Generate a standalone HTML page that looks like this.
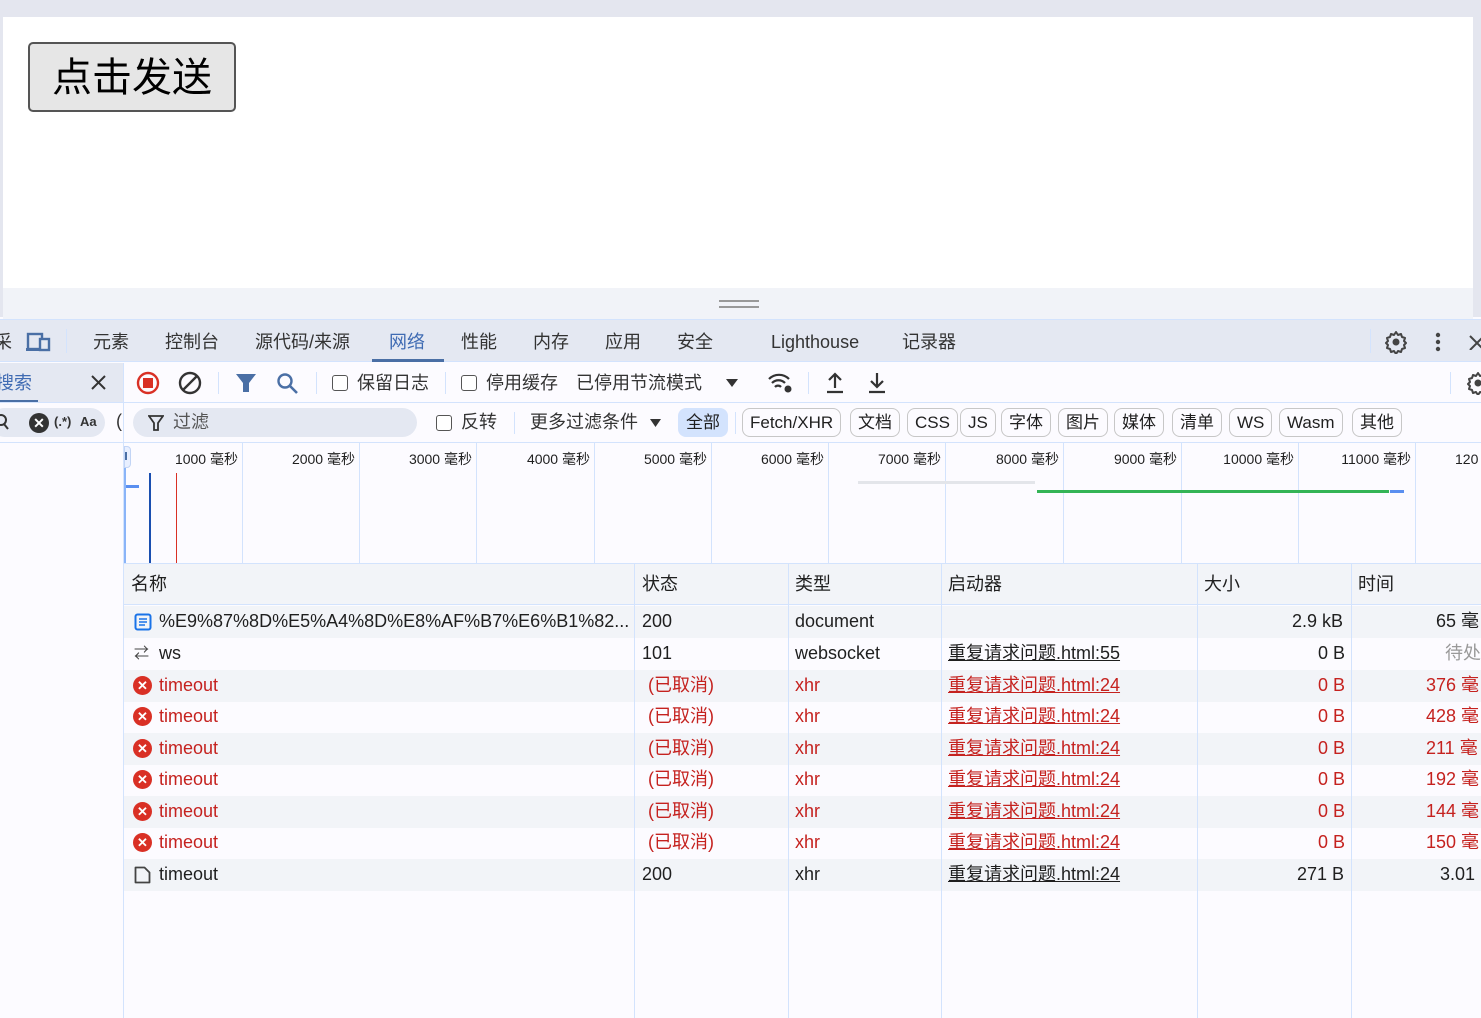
<!DOCTYPE html>
<html><head><meta charset="utf-8">
<style>
*{box-sizing:border-box;margin:0;padding:0}
body{width:1481px;height:1018px;overflow:hidden;position:relative;background:#fcfbff;font-family:"Liberation Sans","Noto Sans CJK SC",sans-serif;color:#1f1f1f}
.a{position:absolute;white-space:nowrap}
.vl{position:absolute;width:1px;background:#d3e3fd}
.hl{position:absolute;height:1px;background:#d3e3fd}
.tab{position:absolute;top:330px;font-size:18px;line-height:24px;color:#333}
.chip{position:absolute;top:408px;height:29px;border:1px solid #c7c7c7;border-radius:8px;font-size:17px;line-height:27px;padding:0 7px;color:#1f1f1f;background:#fcfbff}
.tl{position:absolute;top:450px;font-size:14px;line-height:18px;color:#1f1f1f;text-align:right;width:110px}
.row{position:absolute;left:124px;width:1357px;height:32px;font-size:18px}
.row .a{top:0;line-height:31px}
.g{background:#f2f4f8}
.red{color:#c5221f}
.u{text-decoration:underline}
.cb{position:absolute;width:16px;height:16px;border:1.5px solid #555;border-radius:3px;background:#fff}
.hd{position:absolute;top:564px;font-size:18px;line-height:40px}
</style></head><body>
<div class="a" style="left:0;top:0;width:1481px;height:17px;background:#e4e6ef"></div>
<div class="a" style="left:0;top:17px;width:3px;height:300px;background:#e4e6ef"></div>
<div class="a" style="left:1473px;top:17px;width:8px;height:300px;background:#e4e6ef"></div>
<div class="a" style="left:3px;top:17px;width:1470px;height:271px;background:#fff"></div>
<div class="a" style="left:28px;top:42px;width:208px;height:70px;border:2px solid #555;border-radius:5px;background:#e6e6e6;font-size:40px;line-height:68px;text-align:center;color:#000">点击发送</div>
<div class="a" style="left:3px;top:288px;width:1470px;height:31px;background:#f1f3f8"></div>
<div class="a" style="left:719px;top:300px;width:40px;height:2px;background:#999"></div>
<div class="a" style="left:719px;top:306px;width:40px;height:2px;background:#999"></div>

<div class="a" style="left:0;top:319px;width:1481px;height:43px;background:#e4e8f2;border-top:1px solid #d3e3fd;border-bottom:1px solid #d3e3fd"></div>
<div class="tab" style="left:-6px">采</div>
<svg class="a" style="left:26px;top:331px" width="26" height="22" viewBox="0 0 26 22"><rect x="2" y="3" width="14" height="15" fill="none" stroke="#4a6fa5" stroke-width="2.4"/><rect x="14" y="8" width="9" height="11" fill="#e4e8f2" stroke="#4a6fa5" stroke-width="2.4"/><rect x="0" y="17" width="14" height="3" fill="#4a6fa5"/></svg>
<div class="vl" style="left:66px;top:329px;height:24px"></div>
<div class="tab" style="left:93px">元素</div>
<div class="tab" style="left:165px">控制台</div>
<div class="tab" style="left:255px">源代码/来源</div>
<div class="tab" style="left:389px;color:#3f6bb3">网络</div>
<div class="a" style="left:372px;top:359px;width:72px;height:3px;background:#4a6fa5"></div>
<div class="tab" style="left:461px">性能</div>
<div class="tab" style="left:533px">内存</div>
<div class="tab" style="left:605px">应用</div>
<div class="tab" style="left:677px">安全</div>
<div class="tab" style="left:771px">Lighthouse</div>
<div class="tab" style="left:902px">记录器</div>
<div class="vl" style="left:1370px;top:329px;height:24px"></div>
<svg class="a" style="left:1384px;top:330px" width="24" height="24" viewBox="0 0 24 24"><path d="M12 2l2 3 3-1 1 3 3 1-1 3 2 2-2 2 1 3-3 1-1 3-3-1-2 3-2-3-3 1-1-3-3-1 1-3-2-2 2-2-1-3 3-1 1-3 3 1z" fill="none" stroke="#444" stroke-width="2" stroke-linejoin="round"/><circle cx="12" cy="12" r="3.5" fill="#444"/></svg>
<svg class="a" style="left:1434px;top:332px" width="8" height="22"><circle cx="4" cy="3" r="2.2" fill="#444"/><circle cx="4" cy="10" r="2.2" fill="#444"/><circle cx="4" cy="17" r="2.2" fill="#444"/></svg>
<svg class="a" style="left:1468px;top:334px" width="16" height="16"><path d="M2 2l14 14M16 2L2 16" stroke="#444" stroke-width="2"/></svg>

<div class="a" style="left:0;top:363px;width:123px;height:40px;background:#e4e8f2"></div>
<div class="a" style="left:-4px;top:371px;font-size:18px;line-height:24px;color:#3f6bb3">搜索</div>
<div class="a" style="left:0;top:400px;width:38px;height:3px;background:#4a6fa5"></div>
<svg class="a" style="left:91px;top:375px" width="15" height="15"><path d="M1 1l13 13M14 1L1 14" stroke="#333" stroke-width="2"/></svg>
<div class="vl" style="left:123px;top:363px;height:655px"></div>
<div class="hl" style="left:0;top:402px;width:1481px"></div>
<svg class="a" style="left:136px;top:371px" width="24" height="24"><circle cx="12" cy="12" r="10" fill="none" stroke="#d93025" stroke-width="2.4"/><rect x="7" y="7" width="10" height="10" fill="#d93025"/></svg>
<svg class="a" style="left:178px;top:371px" width="24" height="24"><circle cx="12" cy="12" r="10" fill="none" stroke="#333" stroke-width="2.4"/><path d="M5 19L19 5" stroke="#333" stroke-width="2.4"/></svg>
<div class="vl" style="left:218px;top:372px;height:22px"></div>
<svg class="a" style="left:235px;top:373px" width="22" height="20"><path d="M1 1h20l-7 9v9h-6v-9z" fill="#4a6fa5"/></svg>
<svg class="a" style="left:276px;top:372px" width="24" height="24"><circle cx="9" cy="9" r="6.5" fill="none" stroke="#4a6fa5" stroke-width="2.4"/><path d="M14 14l7 7" stroke="#4a6fa5" stroke-width="2.6"/></svg>
<div class="vl" style="left:316px;top:372px;height:22px"></div>
<div class="cb" style="left:332px;top:375px"></div>
<div class="a" style="left:357px;top:371px;font-size:18px;line-height:24px;color:#333">保留日志</div>
<div class="vl" style="left:445px;top:372px;height:22px"></div>
<div class="cb" style="left:461px;top:375px"></div>
<div class="a" style="left:486px;top:371px;font-size:18px;line-height:24px;color:#333">停用缓存</div>
<div class="a" style="left:576px;top:371px;font-size:18px;line-height:24px;color:#333">已停用节流模式</div>
<svg class="a" style="left:725px;top:378px" width="14" height="10"><path d="M1 1h12L7 9z" fill="#333"/></svg>
<svg class="a" style="left:767px;top:371px" width="28" height="24"><path d="M2 8a14 14 0 0 1 20 0M5 12a9 9 0 0 1 13 0M8 16a4 4 0 0 1 6 0" fill="none" stroke="#333" stroke-width="2.2"/><circle cx="21" cy="18" r="3.5" fill="#333"/></svg>
<div class="vl" style="left:808px;top:372px;height:22px"></div>
<svg class="a" style="left:825px;top:371px" width="20" height="24"><path d="M10 17V3M4 9l6-6 6 6M2 21h16" fill="none" stroke="#333" stroke-width="2.2"/></svg>
<svg class="a" style="left:867px;top:371px" width="20" height="24"><path d="M10 2v14M4 10l6 6 6-6M2 21h16" fill="none" stroke="#333" stroke-width="2.2"/></svg>
<div class="vl" style="left:1450px;top:372px;height:22px"></div>
<svg class="a" style="left:1466px;top:371px" width="24" height="24" viewBox="0 0 24 24"><path d="M12 2l2 3 3-1 1 3 3 1-1 3 2 2-2 2 1 3-3 1-1 3-3-1-2 3-2-3-3 1-1-3-3-1 1-3-2-2 2-2-1-3 3-1 1-3 3 1z" fill="none" stroke="#444" stroke-width="2" stroke-linejoin="round"/><circle cx="12" cy="12" r="3.5" fill="#444"/></svg>

<div class="hl" style="left:0;top:442px;width:1481px"></div>
<div class="a" style="left:-10px;top:408px;width:115px;height:29px;border-radius:15px;background:#e4e8f2"></div>
<svg class="a" style="left:-3px;top:414px" width="14" height="16"><circle cx="4" cy="6" r="5" fill="none" stroke="#333" stroke-width="2"/><path d="M7 10l4 5" stroke="#333" stroke-width="2"/></svg>
<div class="a" style="left:29px;top:413px;width:20px;height:20px;border-radius:50%;background:#333;color:#fff;font-size:14px;line-height:20px;text-align:center;font-weight:bold">✕</div>
<div class="a" style="left:54px;top:414px;font-size:13px;font-weight:bold;color:#333">(.*)</div>
<div class="a" style="left:80px;top:414px;font-size:13px;font-weight:bold;color:#333">Aa</div>
<div class="a" style="left:116px;top:411px;font-size:18px;color:#333">(</div>
<div class="a" style="left:133px;top:408px;width:284px;height:29px;border-radius:15px;background:#e4e8f2"></div>
<svg class="a" style="left:148px;top:415px" width="16" height="16"><path d="M1 1h14l-5 7v7h-4V8z" fill="none" stroke="#333" stroke-width="1.8"/></svg>
<div class="a" style="left:173px;top:410px;font-size:18px;line-height:24px;color:#555">过滤</div>
<div class="cb" style="left:436px;top:415px"></div>
<div class="a" style="left:461px;top:410px;font-size:18px;line-height:24px;color:#333">反转</div>
<div class="vl" style="left:514px;top:412px;height:22px"></div>
<div class="a" style="left:530px;top:410px;font-size:18px;line-height:24px;color:#333">更多过滤条件</div>
<svg class="a" style="left:649px;top:418px" width="13" height="10"><path d="M1 1h11L6.5 9z" fill="#333"/></svg>
<div class="a" style="left:678px;top:408px;width:50px;height:29px;border-radius:8px;background:#d3e3fd;font-size:17px;line-height:29px;text-align:center;color:#1f1f1f">全部</div>
<div class="vl" style="left:735px;top:412px;height:22px"></div>
<div class="chip" style="left:742px">Fetch/XHR</div>
<div class="chip" style="left:850px">文档</div>
<div class="chip" style="left:907px">CSS</div>
<div class="chip" style="left:960px">JS</div>
<div class="chip" style="left:1001px">字体</div>
<div class="chip" style="left:1058px">图片</div>
<div class="chip" style="left:1114px">媒体</div>
<div class="chip" style="left:1172px">清单</div>
<div class="chip" style="left:1229px">WS</div>
<div class="chip" style="left:1279px">Wasm</div>
<div class="chip" style="left:1352px">其他</div>

<div class="a" style="left:124px;top:443px;width:1357px;height:120px;background:#fcfbff"></div>
<div class="a" style="left:124px;top:446px;width:7px;height:22px;border:1px solid #c2d4f5;border-radius:0 4px 4px 0;background:#e8efff"></div>
<div class="a" style="left:125px;top:452px;width:2px;height:8px;background:#4a6fa5"></div>
<div class="a" style="left:124px;top:468px;width:2px;height:95px;background:#8ab4f8"></div>
<div class="a" style="left:126px;top:485px;width:13px;height:3px;background:#5a8ff0"></div>
<div class="a" style="left:149px;top:473px;width:2px;height:90px;background:#1a4fb0"></div>
<div class="a" style="left:176px;top:473px;width:1px;height:90px;background:#d93025"></div>
<div class="vl" style="left:242px;top:443px;height:120px"></div>
<div class="vl" style="left:359px;top:443px;height:120px"></div>
<div class="vl" style="left:476px;top:443px;height:120px"></div>
<div class="vl" style="left:594px;top:443px;height:120px"></div>
<div class="vl" style="left:711px;top:443px;height:120px"></div>
<div class="vl" style="left:828px;top:443px;height:120px"></div>
<div class="vl" style="left:945px;top:443px;height:120px"></div>
<div class="vl" style="left:1063px;top:443px;height:120px"></div>
<div class="vl" style="left:1181px;top:443px;height:120px"></div>
<div class="vl" style="left:1298px;top:443px;height:120px"></div>
<div class="vl" style="left:1415px;top:443px;height:120px"></div>
<div class="tl" style="left:128px">1000 毫秒</div>
<div class="tl" style="left:245px">2000 毫秒</div>
<div class="tl" style="left:362px">3000 毫秒</div>
<div class="tl" style="left:480px">4000 毫秒</div>
<div class="tl" style="left:597px">5000 毫秒</div>
<div class="tl" style="left:714px">6000 毫秒</div>
<div class="tl" style="left:831px">7000 毫秒</div>
<div class="tl" style="left:949px">8000 毫秒</div>
<div class="tl" style="left:1067px">9000 毫秒</div>
<div class="tl" style="left:1184px">10000 毫秒</div>
<div class="tl" style="left:1301px">11000 毫秒</div>
<div class="a" style="left:1455px;top:450px;font-size:14px;line-height:18px">120</div>
<div class="a" style="left:858px;top:481px;width:177px;height:3px;background:#e3e5ea"></div>
<div class="a" style="left:1037px;top:490px;width:352px;height:3px;background:#34b456"></div>
<div class="a" style="left:1390px;top:490px;width:14px;height:3px;background:#5a8ff0"></div>

<div class="a" style="left:124px;top:563px;width:1357px;height:42px;background:#f2f4f8;border-top:1px solid #d3e3fd;border-bottom:1px solid #d3e3fd"></div>
<div class="hd" style="left:131px">名称</div>
<div class="hd" style="left:642px">状态</div>
<div class="hd" style="left:795px">类型</div>
<div class="hd" style="left:948px">启动器</div>
<div class="hd" style="left:1204px">大小</div>
<div class="hd" style="left:1358px">时间</div>

<div class="row g" style="top:606px">
<svg class="a" style="left:10px;top:7px" width="18" height="18"><rect x="1.5" y="1.5" width="15" height="15" rx="2" fill="none" stroke="#1a73e8" stroke-width="2"/><path d="M5 6h8M5 9h8M5 12h6" stroke="#1a73e8" stroke-width="1.6"/></svg>
<div class="a" style="left:35px">%E9%87%8D%E5%A4%8D%E8%AF%B7%E6%B1%82...</div>
<div class="a" style="left:518px">200</div><div class="a" style="left:671px">document</div>
<div class="a" style="left:1168px">2.9 kB</div><div class="a" style="left:1312px">65 毫</div></div>
<div class="row" style="top:638px">
<div class="a" style="left:10px;font-size:15px;color:#444">⇄</div>
<div class="a" style="left:35px">ws</div>
<div class="a" style="left:518px">101</div><div class="a" style="left:671px">websocket</div>
<div class="a u" style="left:824px">重复请求问题.html:55</div>
<div class="a" style="left:1194px">0 B</div><div class="a" style="left:1321px;color:#999">待处</div></div>

<div class="row g red" style="top:670px"><div class="a" style="left:9px;top:6px;width:19px;height:19px;border-radius:50%;background:#d93025;color:#fff;font-size:13px;line-height:19px;text-align:center;font-weight:bold">✕</div><div class="a" style="left:35px">timeout</div><div class="a" style="left:524px">(已取消)</div><div class="a" style="left:671px">xhr</div><div class="a u" style="left:824px">重复请求问题.html:24</div><div class="a" style="left:1194px">0 B</div><div class="a" style="left:1302px">376 毫</div></div>
<div class="row red" style="top:701px"><div class="a" style="left:9px;top:6px;width:19px;height:19px;border-radius:50%;background:#d93025;color:#fff;font-size:13px;line-height:19px;text-align:center;font-weight:bold">✕</div><div class="a" style="left:35px">timeout</div><div class="a" style="left:524px">(已取消)</div><div class="a" style="left:671px">xhr</div><div class="a u" style="left:824px">重复请求问题.html:24</div><div class="a" style="left:1194px">0 B</div><div class="a" style="left:1302px">428 毫</div></div>
<div class="row g red" style="top:733px"><div class="a" style="left:9px;top:6px;width:19px;height:19px;border-radius:50%;background:#d93025;color:#fff;font-size:13px;line-height:19px;text-align:center;font-weight:bold">✕</div><div class="a" style="left:35px">timeout</div><div class="a" style="left:524px">(已取消)</div><div class="a" style="left:671px">xhr</div><div class="a u" style="left:824px">重复请求问题.html:24</div><div class="a" style="left:1194px">0 B</div><div class="a" style="left:1302px">211 毫</div></div>
<div class="row red" style="top:764px"><div class="a" style="left:9px;top:6px;width:19px;height:19px;border-radius:50%;background:#d93025;color:#fff;font-size:13px;line-height:19px;text-align:center;font-weight:bold">✕</div><div class="a" style="left:35px">timeout</div><div class="a" style="left:524px">(已取消)</div><div class="a" style="left:671px">xhr</div><div class="a u" style="left:824px">重复请求问题.html:24</div><div class="a" style="left:1194px">0 B</div><div class="a" style="left:1302px">192 毫</div></div>
<div class="row g red" style="top:796px"><div class="a" style="left:9px;top:6px;width:19px;height:19px;border-radius:50%;background:#d93025;color:#fff;font-size:13px;line-height:19px;text-align:center;font-weight:bold">✕</div><div class="a" style="left:35px">timeout</div><div class="a" style="left:524px">(已取消)</div><div class="a" style="left:671px">xhr</div><div class="a u" style="left:824px">重复请求问题.html:24</div><div class="a" style="left:1194px">0 B</div><div class="a" style="left:1302px">144 毫</div></div>
<div class="row red" style="top:827px"><div class="a" style="left:9px;top:6px;width:19px;height:19px;border-radius:50%;background:#d93025;color:#fff;font-size:13px;line-height:19px;text-align:center;font-weight:bold">✕</div><div class="a" style="left:35px">timeout</div><div class="a" style="left:524px">(已取消)</div><div class="a" style="left:671px">xhr</div><div class="a u" style="left:824px">重复请求问题.html:24</div><div class="a" style="left:1194px">0 B</div><div class="a" style="left:1302px">150 毫</div></div>
<div class="row g" style="top:859px">
<svg class="a" style="left:10px;top:7px" width="17" height="18"><path d="M1.5 1.5h9l5 5v10h-14z" fill="none" stroke="#444" stroke-width="1.8" stroke-linejoin="round"/></svg>
<div class="a" style="left:35px">timeout</div><div class="a" style="left:518px">200</div><div class="a" style="left:671px">xhr</div><div class="a u" style="left:824px">重复请求问题.html:24</div><div class="a" style="left:1173px">271 B</div><div class="a" style="left:1316px">3.01</div></div>

<div class="vl" style="left:634px;top:564px;height:454px"></div>
<div class="vl" style="left:788px;top:564px;height:454px"></div>
<div class="vl" style="left:941px;top:564px;height:454px"></div>
<div class="vl" style="left:1197px;top:564px;height:454px"></div>
<div class="vl" style="left:1351px;top:564px;height:454px"></div>
</body></html>
